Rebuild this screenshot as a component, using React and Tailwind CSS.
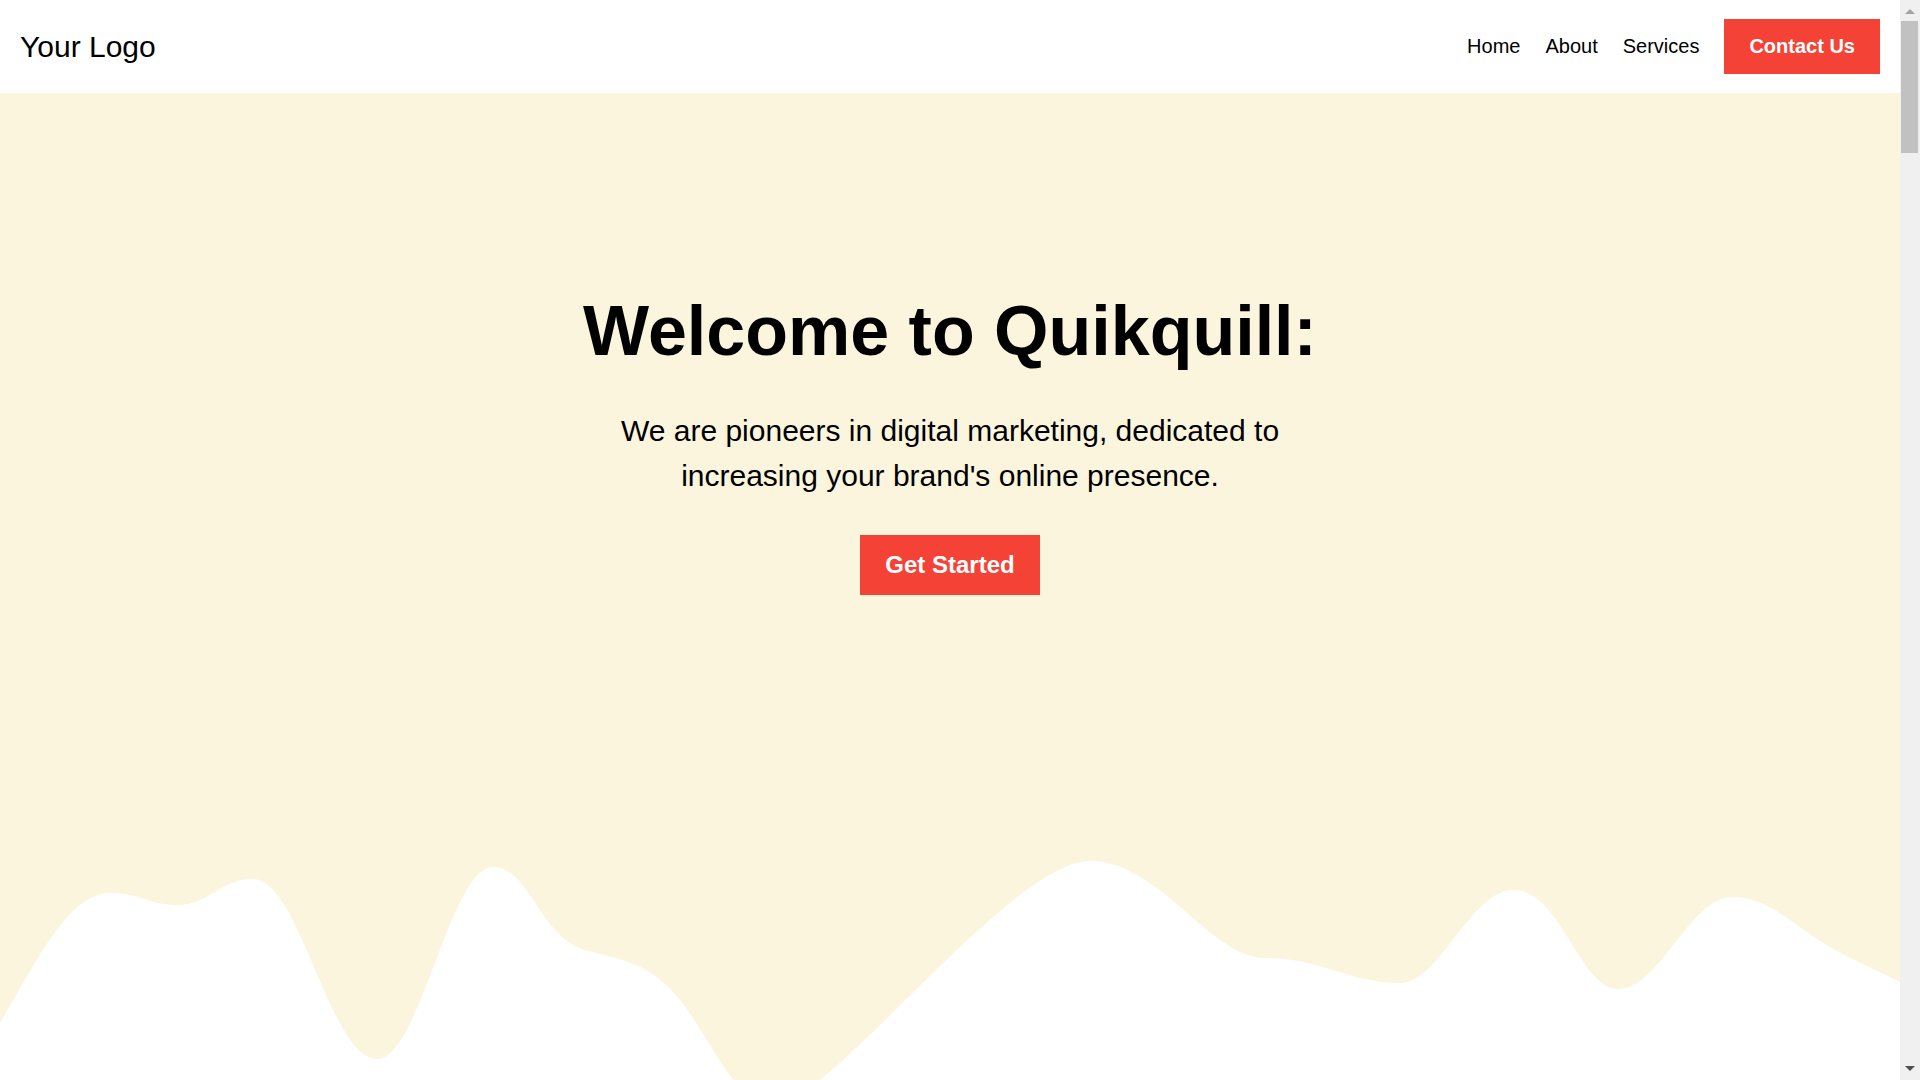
import React from 'react';

const navLinks = ['Home', 'About', 'Services'];

const Header = () => (
    <header className="flex h-[93px] items-center justify-between bg-white px-[20px]">
        <a href="#" className="text-[30px] text-black">Your Logo</a>
        <nav className="flex items-center gap-[25px]">
            {navLinks.map((link) => (
                <a key={link} href={`#${link.toLowerCase()}`} className="text-[20px] text-black">
                    {link}
                </a>
            ))}
            <a href="#contact" className="bg-[#f44336] px-[25px] py-4 text-[20px] font-bold text-white">
                Contact Us
            </a>
        </nav>
    </header>
);

// wave drawn in page pixels (content is 1900 wide next to the scrollbar)
const Wave = () => (
    <svg
        className="block h-[300px] w-full"
        viewBox="0 0 1900 300"
        preserveAspectRatio="none"
        aria-hidden="true"
    >
        <path
            fill="#fbf5dd"
            d="M0,183 C40,115 70,53 110,53 C140,53 150,65 177,65 C210,65 220,39 253,39 C300,39 330,219 377,219 C420,219 450,27 493,27 C530,27 540,98 585,110 C620,120 650,122 680,160 C712,200 735,265 773,265 C830,265 1010,21 1090,21 C1160,21 1210,118 1265,118 C1320,118 1350,143 1400,143 C1440,143 1470,50 1514,50 C1560,50 1580,149 1618,149 C1660,149 1690,57 1732,57 C1775,57 1800,95 1850,118 L1900,142 L1900,0 L0,0 Z"
        />
    </svg>
);

const Hero = () => (
    <section>
        <div className="h-[747px] bg-[#fbf5dd] pt-[198px] text-center">
            <h1 className="text-[70px] font-bold text-black">Welcome to Quikquill:</h1>
            <p className="mx-auto mt-[37px] max-w-[700px] text-[30px] leading-[45px] text-black">
                We are pioneers in digital marketing, dedicated to increasing your brand's online presence.
            </p>
            <a
                href="#contact"
                className="mt-[37px] inline-block bg-[#f44336] px-[25px] py-4 text-[24px] font-bold text-white"
            >
                Get Started
            </a>
        </div>
        <Wave />
    </section>
);

// the browser's scrollbar as seen in the shot: page is long, scrolled to top
const Scrollbar = () => (
    <div className="fixed right-0 top-0 h-screen w-[20px] bg-[#f0f0f0]">
        <div className="absolute left-[5px] top-[9px] h-0 w-0 border-x-[5px] border-b-[5px] border-x-transparent border-b-[#a3a3a3]" />
        <div className="absolute left-[1px] top-[21px] h-[132px] w-[17px] bg-[#c1c1c1]" />
        <div className="absolute bottom-[9px] left-[5px] h-0 w-0 border-x-[5px] border-t-[5px] border-x-transparent border-t-[#505050]" />
    </div>
);

export default function App() {
    return (
        <div className="mr-[20px] bg-white font-['Liberation_Sans',Arial,sans-serif] leading-[normal] text-black">
            <Header />
            <Hero />
            <section id="about" className="min-h-[1850px]" />
            <section id="services" className="min-h-[1850px]" />
            <section id="work" className="min-h-[1850px]" />
            <section id="contact" className="min-h-[1850px]" />
            <Scrollbar />
        </div>
    );
}
